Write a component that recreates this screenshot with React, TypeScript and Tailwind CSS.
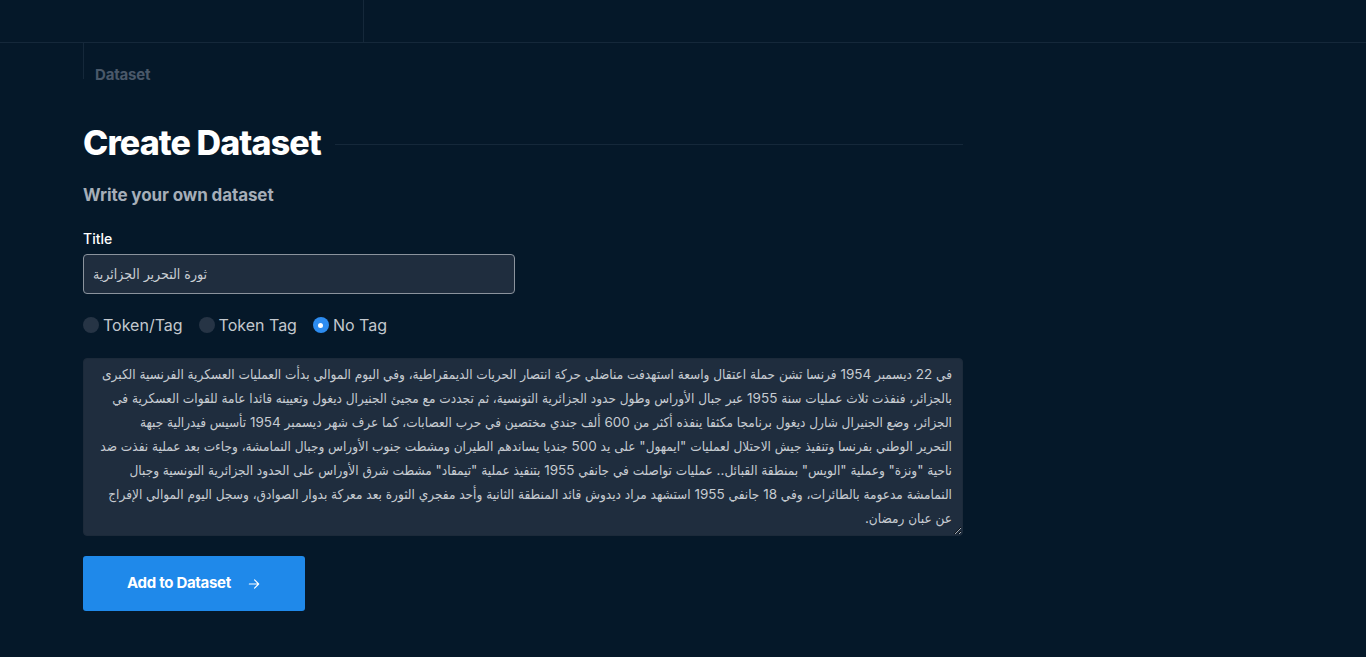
import { useState } from 'react';

const BODY = [
  'في 22 ديسمبر 1954 فرنسا تشن حملة اعتقال واسعة استهدفت مناضلي حركة انتصار الحريات الديمقراطية، وفي اليوم الموالي بدأت العمليات العسكرية الفرنسية الكبرى',
  'بالجزائر، فنفذت ثلاث عمليات سنة 1955 عبر جبال الأوراس وطول حدود الجزائرية التونسية، ثم تجددت مع مجيئ الجنيرال ديغول وتعيينه قائدا عامة للقوات العسكرية في',
  'الجزائر، وضع الجنيرال شارل ديغول برنامجا مكثفا ينفذه أكثر من 600 ألف جندي مختصين في حرب العصابات، كما عرف شهر ديسمبر 1954 تأسيس فيدرالية جبهة',
  'التحرير الوطني بفرنسا وتنفيذ جيش الاحتلال لعمليات "ايمهول" على يد 500 جنديا يساندهم الطيران ومشطت جنوب الأوراس وجبال النمامشة، وجاءت بعد عملية نفذت ضد',
  'ناحية "ونزة" وعملية "الويس" بمنطقة القبائل.. عمليات تواصلت في جانفي 1955 بتنفيذ عملية "تيمقاد" مشطت شرق الأوراس على الحدود الجزائرية التونسية وجبال',
  'النمامشة مدعومة بالطائرات، وفي 18 جانفي 1955 استشهد مراد ديدوش قائد المنطقة الثانية وأحد مفجري الثورة بعد معركة بدوار الصوادق، وسجل اليوم الموالي الإفراج',
  'عن عبان رمضان.',
].join('\n');

const TAGS = ['Token/Tag', 'Token Tag', 'No Tag'];

export default function App() {
  const [title, setTitle] = useState('ثورة التحرير الجزائرية');
  const [tag, setTag] = useState('No Tag');
  const [text, setText] = useState(BODY);

  return (
    <div className="min-h-[657px] bg-[#051829] font-['Inter',sans-serif] text-white">
      {/* top bar */}
      <div className="h-[43px] border-b border-[#15283a] flex">
        <div className="w-[364px] border-r border-[#15283a]" />
      </div>

      <div className="pl-[83px]">
        <div className="border-l border-[#15283a] h-[36px] pl-[11px] pt-[19px]">
          <span className="text-[15px] font-bold tracking-[-0.2px] text-[#4a5869] leading-none">Dataset</span>
        </div>

        <div className="w-[880px] pt-[44px]">
          <div className="flex items-center gap-[14px]">
            <h1 className="text-[34px] font-extrabold tracking-[-0.9px] leading-[40px] whitespace-nowrap">Create Dataset</h1>
            <div className="flex-1 h-px bg-[#15283a] mt-[2px]" />
          </div>

          <h2 className="mt-[20px] text-[17px] font-bold tracking-[-0.1px] text-[#a6aeb8] leading-[24px]">
            Write your own dataset
          </h2>

          <label className="block mt-[22px] text-[14px] font-medium text-white leading-[20px]">Title</label>
          <input
            value={title}
            onChange={(e) => setTitle(e.target.value)}
            className="mt-[5px] block w-[432px] h-[40px] rounded-[4px] border border-[#8b939d] bg-[#1f2d3e] px-[9px] text-[14px] text-[#c9cdd3] outline-none font-['DejaVu_Sans_Condensed','DejaVu_Sans',sans-serif]"
          />

          <div className="mt-[20px] flex items-center gap-[16px]">
            {TAGS.map((t) => (
              <label key={t} className="flex items-center gap-[4px] cursor-pointer" onClick={() => setTag(t)}>
                <span
                  className={`w-[16px] h-[16px] rounded-full flex items-center justify-center ${
                    tag === t ? 'bg-[#2d8cf0]' : 'bg-[#263445]'
                  }`}
                >
                  {tag === t && <span className="w-[5px] h-[5px] rounded-full bg-white" />}
                </span>
                <span className="text-[16px] text-[#c3c8ce] leading-[22px]">{t}</span>
              </label>
            ))}
          </div>

          <textarea
            value={text}
            onChange={(e) => setText(e.target.value)}
            className="mt-[22px] block w-[880px] h-[178px] rounded-[4px] border border-[#1c2a3a] bg-[#1f2d3e] px-[10px] py-[3px] text-[13.5px] leading-[24px] text-right [unicode-bidi:plaintext] text-[#c6cbd1] outline-none font-['Inter','DejaVu_Sans_Condensed','DejaVu_Sans',sans-serif]"
          />

          <button
            type="button"
            className="mt-[20px] w-[222px] h-[55px] rounded-[3px] bg-[#1f89ea] flex items-center justify-center gap-[16px] text-[15px] font-bold tracking-[-0.3px] text-white"
          >
            Add to Dataset
            <svg width="14" height="14" viewBox="0 0 24 24" fill="none" stroke="currentColor" strokeWidth={2} strokeLinecap="round" strokeLinejoin="round">
              <path d="M4 12h16M13 5l7 7-7 7" />
            </svg>
          </button>
        </div>
      </div>
    </div>
  );
}
